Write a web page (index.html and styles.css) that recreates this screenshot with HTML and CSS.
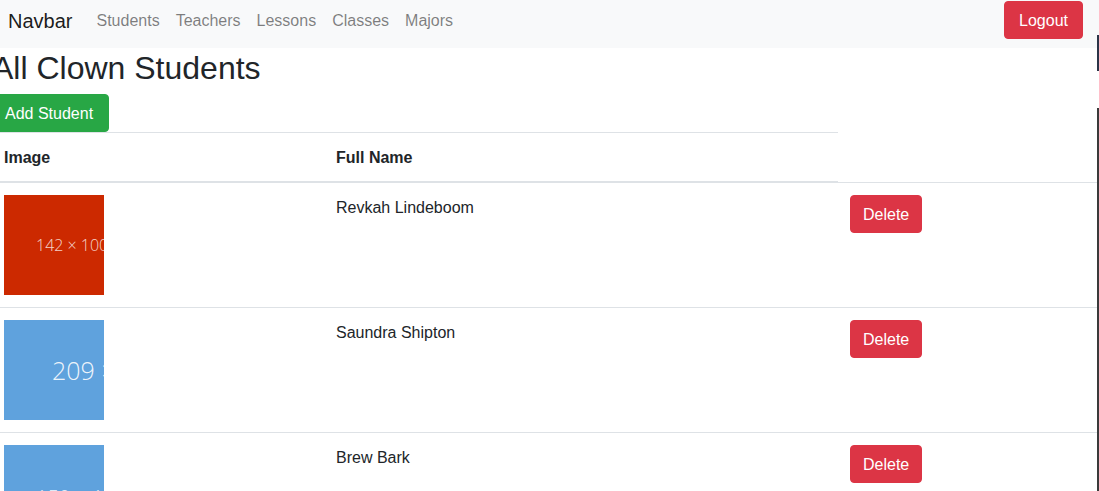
FILE: index.html
```html
<!DOCTYPE html>
<html lang="en">
<head>
<meta charset="utf-8">
<title>All Clown Students</title>
<link rel="stylesheet" href="styles.css">
</head>
<body>
<nav class="navbar">
  <a class="brand" href="#">Navbar</a>
  <ul class="nav-links">
    <li><a class="nav-link" href="#">Students</a></li>
    <li><a class="nav-link" href="#">Teachers</a></li>
    <li><a class="nav-link" href="#">Lessons</a></li>
    <li><a class="nav-link" href="#">Classes</a></li>
    <li><a class="nav-link" href="#">Majors</a></li>
  </ul>
  <button class="btn btn-danger logout">Logout</button>
</nav>
<main class="main">
  <h2 class="title">All Clown Students</h2>
  <button class="btn btn-success add">Add Student</button>
  <table class="table">
    <colgroup>
      <col class="col-img">
      <col class="col-name">
      <col class="col-action">
    </colgroup>
    <thead>
      <tr>
        <th>Image</th>
        <th>Full Name</th>
      </tr>
    </thead>
    <tbody>
      <tr>
        <td><div class="ph ph-red"><span class="ph-text ph-small">142 × 100</span></div></td>
        <td class="cell-text">Revkah Lindeboom</td>
        <td><button class="btn btn-danger">Delete</button></td>
      </tr>
      <tr>
        <td><div class="ph ph-blue"><span class="ph-text ph-large">209 × 100</span></div></td>
        <td class="cell-text">Saundra Shipton</td>
        <td><button class="btn btn-danger">Delete</button></td>
      </tr>
      <tr>
        <td><div class="ph ph-blue"><span class="ph-text ph-mid">150 × 100</span></div></td>
        <td class="cell-text">Brew Bark</td>
        <td><button class="btn btn-danger">Delete</button></td>
      </tr>
    </tbody>
  </table>
</main>
<div class="edge edge-top"></div>
<div class="edge edge-bottom"></div>
</body>
</html>
```

FILE: styles.css
```css
html {
  overflow: hidden;
}

body {
  margin: 0;
  font-family: "Liberation Sans", Arial, sans-serif;
  font-size: 16px;
  line-height: 1.5;
  color: #212529;
  background: #fff;
}

.navbar {
  display: flex;
  align-items: flex-start;
  height: 48px;
  box-sizing: border-box;
  padding: 1px 16px 0 8px;
  background: #f8f9fa;
}

.brand {
  font-size: 20px;
  line-height: 30px;
  padding: 5px 0 3px;
  margin-right: 16px;
  color: rgba(0, 0, 0, 0.9);
  text-decoration: none;
}

.nav-links {
  display: flex;
  list-style: none;
  margin: 0;
  padding: 0;
  flex: 1;
}

.nav-link {
  display: block;
  padding: 8px 8px 6px;
  color: rgba(0, 0, 0, 0.5);
  text-decoration: none;
}

.btn {
  font-family: inherit;
  font-size: 16px;
  line-height: 24px;
  padding: 7px 12px 5px;
  border: 1px solid transparent;
  border-radius: 4px;
  color: #fff;
  cursor: pointer;
}

.btn-danger {
  background: #dc3545;
  border-color: #dc3545;
}

.btn-success {
  background: #28a745;
  border-color: #28a745;
}

.logout {
  padding: 7px 14px 5px;
}

.add {
  padding: 7px 15px 5px 12px;
}

.main {
  margin-left: -8px;
}

.title {
  margin: 1px 0 7px;
  font-size: 32px;
  font-weight: 500;
  line-height: 1.2;
}

.table {
  width: 1107px;
  border-collapse: collapse;
  color: #212529;
}

.col-img {
  width: 332px;
}

.col-name {
  width: 514px;
}

.table th,
.table td {
  padding: 12px;
  text-align: left;
  vertical-align: top;
  border-top: 1px solid #dee2e6;
}

.table thead th {
  vertical-align: bottom;
  border-bottom: 2px solid #dee2e6;
  font-weight: bold;
  padding: 13px 12px 11px;
}

.table td.cell-text {
  padding: 13px 12px 11px;
}

.ph {
  position: relative;
  width: 100px;
  height: 100px;
  overflow: hidden;
}

.ph-red {
  background: #cc2900;
}

.ph-blue {
  background: #5fa2dd;
}

.ph-text {
  position: absolute;
  top: 50%;
  white-space: nowrap;
  transform: translateY(-50%);
  font-family: "Open Sans", sans-serif;
  font-weight: 300;
  color: rgba(255, 255, 255, 0.8);
  line-height: 1;
}

.ph-small {
  left: 32px;
  font-size: 16px;
}

.ph-large {
  left: 48px;
  font-size: 25px;
  color: rgba(255, 255, 255, 0.9);
}

.ph-mid {
  top: 53%;
  left: 32px;
  font-size: 20px;
}

.edge {
  position: absolute;
  left: 1097px;
  width: 2px;
}

.edge-top {
  top: 35px;
  height: 36px;
  background: #2b3448;
}

.edge-bottom {
  top: 108px;
  height: 383px;
  background: #3a3a3a;
}
```
